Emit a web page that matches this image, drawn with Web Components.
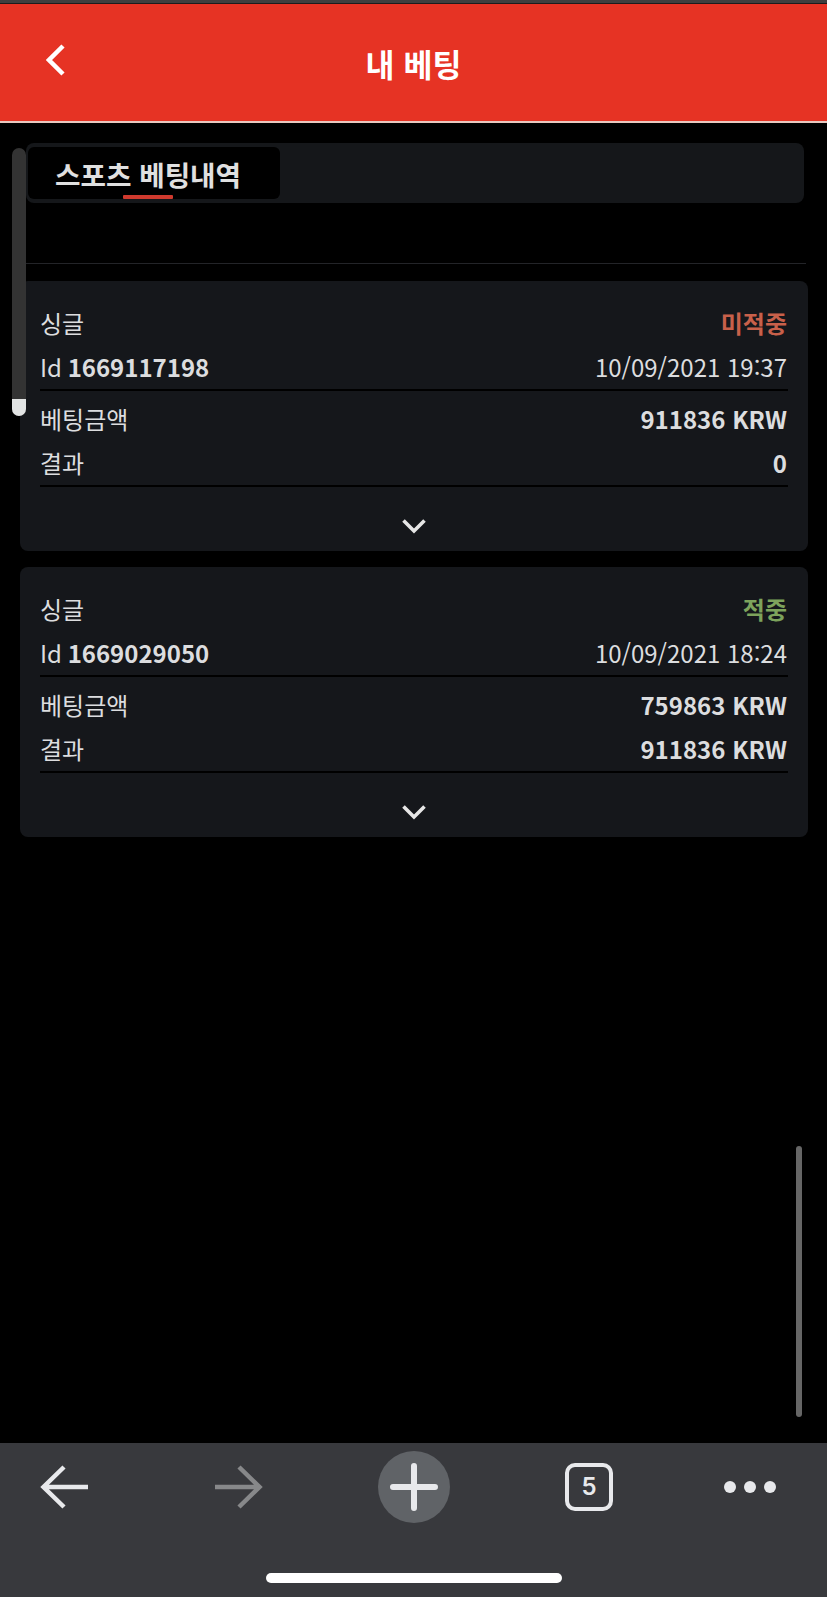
<!DOCTYPE html>
<html lang="ko">
<head>
<meta charset="utf-8">
<title>내 베팅</title>
<style>
  html, body { margin: 0; padding: 0; background: #000; }
  body { font-family: "Noto Sans CJK KR", "Noto Sans", sans-serif; }
</style>
</head>
<body>
<bet-app>
  <app-header slot="top">내 베팅</app-header>
  <bet-tabs><span>스포츠 베팅내역</span></bet-tabs>
  <bet-card>
    <span slot="kind">싱글</span>
    <span slot="status" style="color:#c8604a">미적중</span>
    <span slot="id">1669117198</span>
    <span slot="date">10/09/2021 19:37</span>
    <span slot="stake">911836 KRW</span>
    <span slot="result">0</span>
  </bet-card>
  <bet-card>
    <span slot="kind">싱글</span>
    <span slot="status" style="color:#7da35c">적중</span>
    <span slot="id">1669029050</span>
    <span slot="date">10/09/2021 18:24</span>
    <span slot="stake">759863 KRW</span>
    <span slot="result">911836 KRW</span>
  </bet-card>
  <browser-bar slot="bottom" tabs="5"></browser-bar>
</bet-app>

<script>
class BetApp extends HTMLElement {
  constructor() {
    super();
    this.shadowDOM = this.attachShadow({ mode: 'open' });
    this.shadowDOM.innerHTML = `
      <style>
        :host { display: flex; flex-direction: column; width: 827px; height: 1597px; background: #000; position: relative; overflow: hidden; }
        .content { flex: 1; display: flex; flex-direction: column; }
        .rail { position: absolute; left: 12px; top: 148px; width: 14px; height: 268px; background: #333; border-radius: 7px; overflow: hidden; }
        .rail i { position: absolute; left: 0; right: 0; bottom: 0; height: 17px; background: #e2e4e4; }
        .page-bar { position: absolute; left: 796px; top: 1146px; width: 6px; height: 271px; background: #666; border-radius: 3px; }
      </style>
      <slot name="top"></slot>
      <div class="content"><slot></slot></div>
      <slot name="bottom"></slot>
      <div class="rail"><i></i></div>
      <div class="page-bar"></div>`;
  }
}

class AppHeader extends HTMLElement {
  constructor() {
    super();
    this.shadowDOM = this.attachShadow({ mode: 'open' });
    this.shadowDOM.innerHTML = `
      <style>
        :host { display: block; background: #3f3f3f; padding-top: 3px; }
        .bar { height: 117px; margin-top: 1px; background: #e63324; border-bottom: 2px solid #e8c9c0; display: grid; grid-template-columns: 1fr auto 1fr; align-items: center; box-shadow: 0 -1px 0 #1c1c1c; }
        svg { margin-left: 46px; margin-top: -5px; display: block; }
        .title { color: #fff; font-size: 31.5px; font-weight: 700; line-height: 40px; }
      </style>
      <div class="bar">
        <svg width="20" height="34" viewBox="0 0 20 34"><path d="M17 3 L3 17 L17 31" fill="none" stroke="#fff" stroke-width="4.5"/></svg>
        <div class="title"><slot></slot></div>
        <span></span>
      </div>`;
  }
}

class BetTabs extends HTMLElement {
  constructor() {
    super();
    this.shadowDOM = this.attachShadow({ mode: 'open' });
    this.shadowDOM.innerHTML = `
      <style>
        :host { display: block; padding: 20px 23px 1px 26px; }
        .tabs { height: 60px; box-sizing: border-box; padding: 4px 2px; background: #15171a; border-radius: 8px; display: flex; }
        .tab { width: 252px; height: 52px; box-sizing: border-box; padding-left: 27px; background: #000; border-radius: 6px; color: #e0e0e0; font-size: 27.7px; font-weight: 700; line-height: 54px; position: relative; }
        .tab::after { content: ""; position: absolute; left: 95px; bottom: 0; width: 50px; height: 4px; border-radius: 1px; background: #d03a2e; }
        .rule { height: 1px; margin: 60px -2px 0 0; background: #232428; }
      </style>
      <div class="tabs"><div class="tab"><slot></slot></div></div>
      <div class="rule"></div>`;
  }
}

class BetCard extends HTMLElement {
  constructor() {
    super();
    this.shadowDOM = this.attachShadow({ mode: 'open' });
    this.shadowDOM.innerHTML = `
      <style>
        :host { display: block; margin: 16px 19px 0 20px; font-size: 24px; color: #dcdddf; }
        .card { height: 270px; box-sizing: border-box; padding: 20px 21px 0 20px; background: #15171b; border-radius: 8px; display: flex; flex-direction: column; }
        .row { display: flex; justify-content: space-between; align-items: center; height: 44px; line-height: 44px; white-space: nowrap; }
        .bold { font-weight: 700; }
        .id { margin-left: -1px; }
        .rule { height: 2px; background: #000; margin-right: -1px; }
        .gap { height: 6px; }
        .more { flex: 1; display: flex; align-items: center; justify-content: center; padding-top: 13px; }
        svg { display: block; }
      </style>
      <div class="card">
        <div class="row"><span><slot name="kind"></slot></span><span class="bold"><slot name="status"></slot></span></div>
        <div class="row"><span>Id <span class="bold id"><slot name="id"></slot></span></span><span><slot name="date"></slot></span></div>
        <div class="rule"></div>
        <div class="gap"></div>
        <div class="row"><span>베팅금액</span><span class="bold"><slot name="stake"></slot></span></div>
        <div class="row"><span>결과</span><span class="bold"><slot name="result"></slot></span></div>
        <div class="rule"></div>
        <div class="more">
          <svg width="26" height="16" viewBox="0 0 26 16"><path d="M2.5 2.5 L13 13 L23.5 2.5" fill="none" stroke="#e6e6e6" stroke-width="3.6"/></svg>
        </div>
      </div>`;
  }
}

class BrowserBar extends HTMLElement {
  constructor() {
    super();
    this.shadowDOM = this.attachShadow({ mode: 'open' });
    const tabs = this.getAttribute('tabs');
    this.shadowDOM.innerHTML = `
      <style>
        :host { display: block; height: 154px; background: #38393d; box-sizing: border-box; padding-top: 8px; }
        .icons { display: grid; grid-template-columns: 40px 48px 127px 48px 115px 72px 115px 48px 111px 52px; height: 72px; align-items: center; }
        .icons > * { display: block; }
        .plus { width: 72px; height: 72px; border-radius: 50%; background: #606367; }
        .count { width: 48px; height: 48px; box-sizing: border-box; border: 4px solid #e8e9ec; border-radius: 10px; color: #e8e9ec; font: 600 24px/40px Inter, "Liberation Sans", sans-serif; text-align: center; }
        .home { width: 296px; height: 10px; margin: 50px auto 0; background: #fff; border-radius: 5px; }
      </style>
      <div class="icons">
        <span></span>
        <svg width="48" height="44" viewBox="0 0 48 44"><path d="M48 22 H3.5 M24 2 L3.5 22 L24 42" fill="none" stroke="#e8e9ec" stroke-width="4.5"/></svg>
        <span></span>
        <svg width="48" height="44" viewBox="0 0 48 44"><path d="M0 22 H44.5 M24 2 L44.5 22 L24 42" fill="none" stroke="#87888a" stroke-width="4.5"/></svg>
        <span></span>
        <svg class="plus" width="72" height="72" viewBox="0 0 72 72"><path d="M36 15 V57 M15 36 H57" fill="none" stroke="#e8e9ec" stroke-width="6" stroke-linecap="round"/></svg>
        <span></span>
        <div class="count">${tabs}</div>
        <span></span>
        <svg width="52" height="12" viewBox="0 0 52 12"><circle cx="6" cy="6" r="6" fill="#e8e9ec"/><circle cx="26" cy="6" r="6" fill="#e8e9ec"/><circle cx="46" cy="6" r="6" fill="#e8e9ec"/></svg>
      </div>
      <div class="home"></div>`;
  }
}

customElements.define('bet-app', BetApp);
customElements.define('app-header', AppHeader);
customElements.define('bet-tabs', BetTabs);
customElements.define('bet-card', BetCard);
customElements.define('browser-bar', BrowserBar);
</script>
</body>
</html>
